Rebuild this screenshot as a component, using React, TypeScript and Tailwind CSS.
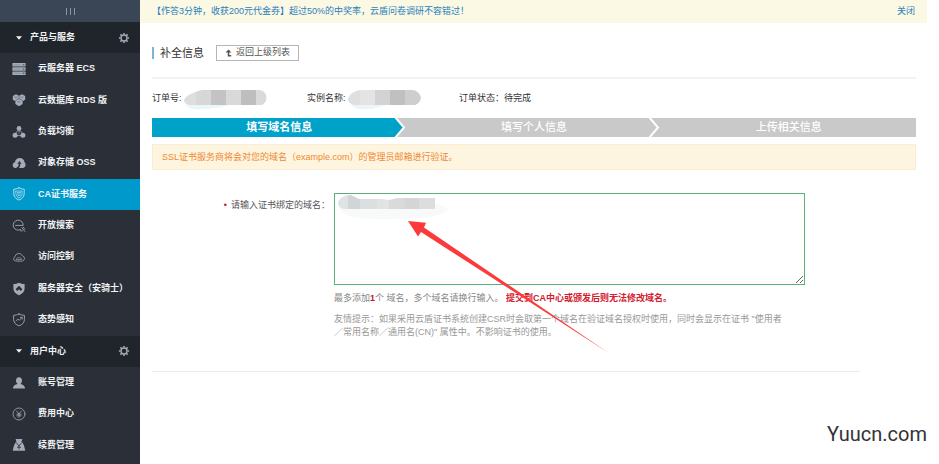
import type { ReactNode } from "react";

type IconProps = { children: ReactNode };

function Icon({ children }: IconProps) {
  return (
    <svg
      viewBox="0 0 14 14"
      className="size-3.5 shrink-0"
      fill="none"
      stroke="currentColor"
      strokeWidth="1"
      strokeLinecap="round"
      strokeLinejoin="round"
      aria-hidden="true"
    >
      {children}
    </svg>
  );
}

const icons = {
  server: (
    <Icon>
      <g fill="currentColor" stroke="none">
        <rect x="0.4" y="1" width="13.2" height="3.6" rx="0.5" />
        <rect x="0.4" y="5.2" width="13.2" height="3.6" rx="0.5" />
        <rect x="0.4" y="9.4" width="13.2" height="3.6" rx="0.5" />
      </g>
      <path d="M11 2.800h1M11 7h1M11 11.200h1" stroke="#2a2f38" strokeWidth="0.8" />
      <path d="M2 2.800h6M2 7h6M2 11.200h6" stroke="#6f7885" strokeWidth="0.5" />
    </Icon>
  ),
  database: (
    <Icon>
      <g fill="currentColor" stroke="none">
        <path d="M.8 3 3.900 1.200 7 2.700l3.100-1.500L13.200 3v3.700l-2.600 1.600v2.800L7 13.200l-3.600-2.100V8.300L.8 6.700z" />
      </g>
      <path d="M7 2.900v2.500M3.600 7.500 7 5.600l3.400 1.900M2.800 4l1.100.6L5 4M9 4l1.100.6 1.100-.6M5.900 8.700l1.100.6 1.100-.6" stroke="#4a515c" strokeWidth="0.6" />
    </Icon>
  ),
  balance: (
    <Icon>
      <path d="M7 5v3M5.800 5.500 3.500 8.500M8.200 5.500l2.300 3M5 10.600h4" strokeWidth="0.8" />
      <g fill="currentColor" stroke="none">
        <circle cx="7" cy="3.400" r="2.400" />
        <circle cx="3.100" cy="10.200" r="2.500" />
        <circle cx="10.900" cy="10.200" r="2.500" />
      </g>
    </Icon>
  ),
  storage: (
    <Icon>
      <path
        d="M3.300 11.900C-.1 11.600-.1 7 2.900 6.300 3.200 3.600 5.300 2 7.700 2c2.700 0 4.600 1.800 4.800 4.300 2 1.600 1.200 5.600-2.100 5.600z"
        fill="currentColor"
        stroke="none"
      />
      <path d="M3.800 11.900c2.300-.6 3-2.300 2.900-4.400l-1.500.4L7.400 5l2.300 2.900-1.400-.4c.1 2-.4 3.500-1.300 4.400z" fill="#2a2f38" stroke="none" />
    </Icon>
  ),
  certificate: (
    <Icon>
      <path d="M7 .9c1.700.9 3.400 1.200 5.200 1.300v4.600c0 3-2.200 5-5.200 6.300C4 11.800 1.800 9.800 1.800 6.800V2.200C3.600 2.100 5.300 1.800 7 .9z" strokeWidth="0.9" />
      <path d="M4 4h6v3.200c0 1.800-1.200 2.900-3 3.800-1.800-.9-3-2-3-3.800zM5.500 5.400h3M5.500 7h3M6 8.600h2" strokeWidth="0.7" />
    </Icon>
  ),
  search: (
    <Icon>
      <path d="M8.600 10.600A5 5 0 1 1 11.200 6.400H3.600M10 8.800l2.900 3.600M11.300 8.300l1.500 1.800M8.600 11.800h1.800" strokeWidth="0.9" />
    </Icon>
  ),
  cloud: (
    <Icon>
      <path d="M3.400 11A2.200 2.200 0 0 1 3 6.800 3.800 3.800 0 0 1 10.300 5.800a2.700 2.700 0 0 1 .4 5.200z" strokeWidth="0.8" />
      <path d="M4.300 9.200c.4-1.400 1.600-2 2.800-1.300 1-.6 2.200 0 2.400 1.300z" strokeWidth="0.7" />
    </Icon>
  ),
  shield: (
    <Icon>
      <path d="M7 .7c1.800.9 3.500 1.300 5.600 1.400v4.500c0 3.200-2.200 5.300-5.600 6.700C3.600 11.900 1.400 9.800 1.400 6.600V2.100C3.500 2 5.200 1.600 7 .7z" fill="currentColor" stroke="none" />
      <path d="M3.600 7.300 7 3.800l3.400 3.500L8.700 9 7 7.200 5.300 9z" fill="#2a2f38" stroke="none" />
    </Icon>
  ),
  trend: (
    <Icon>
      <path d="M7 1c1.700.9 3.400 1.200 5.400 1.300v4.300c0 3-2.200 5-5.400 6.300C3.800 11.600 1.600 9.600 1.600 6.600V2.300C3.600 2.200 5.300 1.900 7 1z" strokeWidth="0.9" />
      <path d="M3.900 8l2-2 1.500 1.300 2.700-2.900M8.300 4.300h1.900v1.800" strokeWidth="0.8" />
    </Icon>
  ),
  user: (
    <Icon>
      <path d="M7 1.200c2 0 3 1.400 3 3.200 0 1.500-.7 2.700-1.500 3.200 0 1 4.500 1 4.500 4.900H1C1 8.600 5.500 8.600 5.500 7.600 4.700 7.100 4 5.900 4 4.400c0-1.800 1-3.200 3-3.200z" fill="currentColor" stroke="none" />
    </Icon>
  ),
  yen: (
    <Icon>
      <circle cx="7" cy="7" r="6" strokeWidth="0.8" />
      <path d="M4.700 4 7 7l2.300-3M7 7v3.400M4.900 7.200h4.200M4.900 8.800h4.200" strokeWidth="0.8" />
    </Icon>
  ),
  renew: (
    <Icon>
      <path d="M3.600 1h6.800L9.600 3.400c1.900 2 3 5.200 3.600 9.300H.8c.6-4.100 1.700-7.300 3.600-9.300z" fill="currentColor" stroke="none" />
      <path d="M4.500 4.800 7 8.200l2.500-3.400M7 8.200v2.800M5.400 9.300h3.200" stroke="#2a2f38" strokeWidth="0.8" />
    </Icon>
  ),
};

type Entry = { label: string; icon: ReactNode; active?: boolean };

const products: Entry[] = [
  { label: "云服务器 ECS", icon: icons.server },
  { label: "云数据库 RDS 版", icon: icons.database },
  { label: "负载均衡", icon: icons.balance },
  { label: "对象存储 OSS", icon: icons.storage },
  { label: "CA证书服务", icon: icons.certificate, active: true },
  { label: "开放搜索", icon: icons.search },
  { label: "访问控制", icon: icons.cloud },
  { label: "服务器安全（安骑士）", icon: icons.shield },
  { label: "态势感知", icon: icons.trend },
];

const account: Entry[] = [
  { label: "账号管理", icon: icons.user },
  { label: "费用中心", icon: icons.yen },
  { label: "续费管理", icon: icons.renew },
];

function SectionHeader({ label }: { label: string }) {
  return (
    <div className="flex max-h-8 min-h-[31px] flex-1 items-center bg-[#20252b] pr-2.5 pl-4 text-[#f0f2f4]">
      <button type="button" className="flex flex-1 items-center gap-2">
        <svg viewBox="0 0 6 4" className="h-1 w-1.5" aria-hidden="true">
          <path d="M0 .3h6L3 3.700z" fill="currentColor" />
        </svg>
        {label}
      </button>
      <button type="button" aria-label={`${label}设置`} className="text-[#a3acb8]">
        <svg viewBox="0 0 12 12" className="size-3" fill="none" stroke="currentColor" aria-hidden="true">
          <circle cx="6" cy="6" r="3" strokeWidth="1.400" />
          <path
            d="M6 .9v1.500M6 9.600v1.500M.9 6h1.500M9.600 6h1.500M2.400 2.400l1.100 1.100M8.500 8.500l1.100 1.100M2.400 9.600l1.100-1.100M8.500 3.500l1.100-1.100"
            strokeWidth="1.600"
          />
        </svg>
      </button>
    </div>
  );
}

function NavItem({ label, icon, active }: Entry) {
  return (
    <a
      href="#"
      aria-current={active ? "page" : undefined}
      className={
        active
          ? "flex max-h-8 min-h-[31px] flex-1 items-center gap-3 bg-[#0099cc] pl-3 text-[#f0f8fc]"
          : "flex max-h-8 min-h-[31px] flex-1 items-center gap-3 pl-3 text-[#f0f2f4]"
      }
    >
      <span className={active ? "text-[#bfe6f5]" : "text-[#a3acb8]"}>{icon}</span>
      {label}
    </a>
  );
}

function Sidebar() {
  return (
    <nav className="flex min-h-screen w-[140px] shrink-0 flex-col bg-[#2a2f38] pb-[3px] text-[9px] font-bold">
      <button
        type="button"
        aria-label="收起导航"
        className="flex h-[22px] shrink-0 items-center justify-center gap-[3px] bg-[#3a4556]"
      >
        <span className="h-[7px] w-px bg-[#8a94a3]" />
        <span className="h-[7px] w-px bg-[#8a94a3]" />
        <span className="h-[7px] w-px bg-[#8a94a3]" />
      </button>
      <SectionHeader label="产品与服务" />
      {products.map((entry) => (
        <NavItem key={entry.label} {...entry} />
      ))}
      <SectionHeader label="用户中心" />
      {account.map((entry) => (
        <NavItem key={entry.label} {...entry} />
      ))}
    </nav>
  );
}

function Chevron({ fill }: { fill: string }) {
  return (
    <svg viewBox="0 0 14 19" className="h-[19px] w-3.5 shrink-0" aria-hidden="true">
      <rect width="14" height="19" fill="#c9c9c9" />
      <path d="M0 0h3l8 9.500L3 19H0z" fill={fill} />
      <path d="M2 -1l9 10.500L2 20" fill="none" stroke="#fff" strokeWidth="2" />
    </svg>
  );
}

function Steps() {
  return (
    <ol className="mt-2 flex text-center text-[11px] leading-[19px] font-bold text-white">
      <li className="flex flex-1" aria-current="step">
        <span className="flex-1 bg-[#00a2ca] pl-3.5">填写域名信息</span>
        <Chevron fill="#00a2ca" />
      </li>
      <li className="flex flex-1 bg-[#c9c9c9] font-medium">
        <span className="flex-1 pl-3.5">填写个人信息</span>
        <Chevron fill="#c9c9c9" />
      </li>
      <li className="flex-1 bg-[#c9c9c9] font-medium">上传相关信息</li>
    </ol>
  );
}

function MaskedOrder() {
  return (
    <svg viewBox="0 0 84 22" className="h-[22px] w-[84px]" aria-label="已隐藏">
      <path d="M2 14c0 7 8 8 20 7 8-1 16-2 24-4V13z" fill="#eaf6f9" />
      <clipPath id="order-mask">
        <path d="M0 12C2 7 10 4 18 2h57c9 0 10 13 2 15H8c-5 0-8-2-8-5z" />
      </clipPath>
      <g clipPath="url(#order-mask)">
        <rect width="12" height="22" fill="#dedede" />
        <rect x="12" width="15" height="22" fill="#d7d7d7" />
        <rect x="27" width="15" height="22" fill="#c3c3c3" />
        <rect x="42" width="15" height="22" fill="#d9d9d9" />
        <rect x="57" width="15" height="22" fill="#bebebe" />
        <rect x="72" width="12" height="22" fill="#dadada" />
      </g>
    </svg>
  );
}

function MaskedName() {
  return (
    <svg viewBox="0 0 74 22" className="h-[22px] w-[74px]" aria-label="已隐藏">
      <path d="M2 14c2 7 10 8 20 7 6-1 10-2 14-4V13z" fill="#eaf6f9" />
      <clipPath id="name-mask">
        <path d="M0 11C2 5 8 2 14 2h51c5 1 7 4 8 8-1 4-3 6-6 7H6c-4-1-6-3-6-6z" />
      </clipPath>
      <g clipPath="url(#name-mask)">
        <rect width="12" height="22" fill="#dfdfdf" />
        <rect x="12" width="15" height="22" fill="#e4e4e4" />
        <rect x="27" width="15" height="22" fill="#d3d3d3" />
        <rect x="42" width="15" height="22" fill="#c0c0c0" />
        <rect x="57" width="17" height="22" fill="#cecece" />
      </g>
    </svg>
  );
}

function DomainField() {
  return (
    <div className="flex pt-[23px]">
      <label htmlFor="domains" className="w-[182px] shrink-0 pt-[3px] pr-1 text-right leading-[18px] text-[#555]">
        <span className="mr-1 text-[#c8202f]">•</span>请输入证书绑定的域名：
      </label>
      <div className="relative w-[471px]">
        <textarea
          id="domains"
          className="block h-[92px] w-full resize border border-[#5bb075] bg-white p-1 outline-none"
        />
        <svg viewBox="0 0 120 26" className="absolute top-0.5 left-1 h-[26px] w-[120px]" aria-hidden="true">
          <path d="M0 9c2 14 20 16 60 15 30 0 45-4 50-9-4-6-18-9-32-8z" fill="#f8fafa" />
          <clipPath id="domain-mask">
            <path d="M0 8C1 3 6 0 13 0l8 4h22l8 1 8-2h38v11H6C2 13 0 11 0 8z" />
          </clipPath>
          <g clipPath="url(#domain-mask)">
            <rect width="10" height="20" fill="#e0e3e3" />
            <rect x="10" width="12" height="20" fill="#d2d5d5" />
            <rect x="22" width="17" height="20" fill="#dcdfdf" />
            <rect x="39" width="12" height="20" fill="#e2e4e4" />
            <rect x="51" width="16" height="20" fill="#d9dbdb" />
            <rect x="67" width="14" height="20" fill="#d4d6d6" />
            <rect x="81" width="16" height="20" fill="#dcdddd" />
          </g>
        </svg>
        <p className="mt-[7px] leading-[13px] text-[#888]">
          最多添加<b className="text-[#c4152a]">1</b>个 域名，多个域名请换行输入。{" "}
          <b className="text-[#d3202e]">提交到CA中心或颁发后则无法修改域名。</b>
        </p>
        <p className="mt-2 leading-[13px] text-[#999]">
          友情提示：如果采用云盾证书系统创建CSR时会取第一个域名在验证域名授权时使用，同时会显示在证书 "使用者
          <br />
          ／常用名称／通用名(CN)" 属性中。不影响证书的使用。
        </p>
        <svg
          viewBox="0 0 202 134"
          className="pointer-events-none absolute top-7 left-[74px] h-[134px] w-[202px]"
          aria-hidden="true"
        >
          <path d="M0 0l18 1.700-2 4.800L200.700 132 13 11l-3 4.500z" fill="#fb3b3b" />
        </svg>
      </div>
    </div>
  );
}

export default function App() {
  return (
    <div className="flex min-h-screen bg-white font-['Liberation_Sans','Noto_Sans_CJK_SC',sans-serif] text-[9px] text-[#333]">
      <Sidebar />
      <main className="flex min-w-0 flex-1 flex-col">
        <div className="mr-3 flex h-[23px] items-center justify-between bg-[#fbf8e4] pr-3 pl-3 leading-[21px] text-[#2a7fbd]">
          <a href="#">【作答3分钟，收获200元代金券】超过50%的中奖率，云盾问卷调研不容错过！</a>
          <button type="button">关闭</button>
        </div>
        <div className="pr-[23px] pl-3">
          <header className="flex h-14 items-center border-b-2 border-[#f1f2f3] pt-1.5">
            <h1 className="border-l-2 border-[#7db4d8] pl-1.5 text-[11px] leading-3">补全信息</h1>
            <button
              type="button"
              className="ml-3 flex h-4 w-[83px] items-center justify-center gap-1 border border-[#b5b5b5] text-[#555]"
            >
              <svg viewBox="0 0 7 8" className="h-2 w-[7px]" fill="none" stroke="currentColor" aria-hidden="true">
                <path d="M3.500 1.500v5.300h2.700" strokeWidth="1.500" />
                <path d="M.6 3.500 3.500.4l2.900 3.100z" fill="currentColor" stroke="none" />
              </svg>
              返回上级列表
            </button>
          </header>
          <dl className="mt-[9px] flex h-[22px] items-center">
            <div className="flex w-[155px] items-center">
              <dt className="w-8">订单号:</dt>
              <dd>
                <MaskedOrder />
              </dd>
            </div>
            <div className="flex w-[152px] items-center">
              <dt className="w-[41px]">实例名称:</dt>
              <dd>
                <MaskedName />
              </dd>
            </div>
            <div className="flex items-center">
              <dt>订单状态：</dt>
              <dd>待完成</dd>
            </div>
          </dl>
          <Steps />
          <p className="mt-[7px] border border-[#fbeed0] bg-[#fef5e1] px-[9px] leading-6 text-[#ee8a2e]">
            SSL证书服务商将会对您的域名（example.com）的管理员邮箱进行验证。
          </p>
          <DomainField />
          <hr className="mt-8 mr-14 border-[#e9e9e9]" />
        </div>
        <footer className="mt-auto pr-3 pb-4 text-right font-[Roboto,sans-serif] text-xl text-[#333]">Yuucn.com</footer>
      </main>
    </div>
  );
}
